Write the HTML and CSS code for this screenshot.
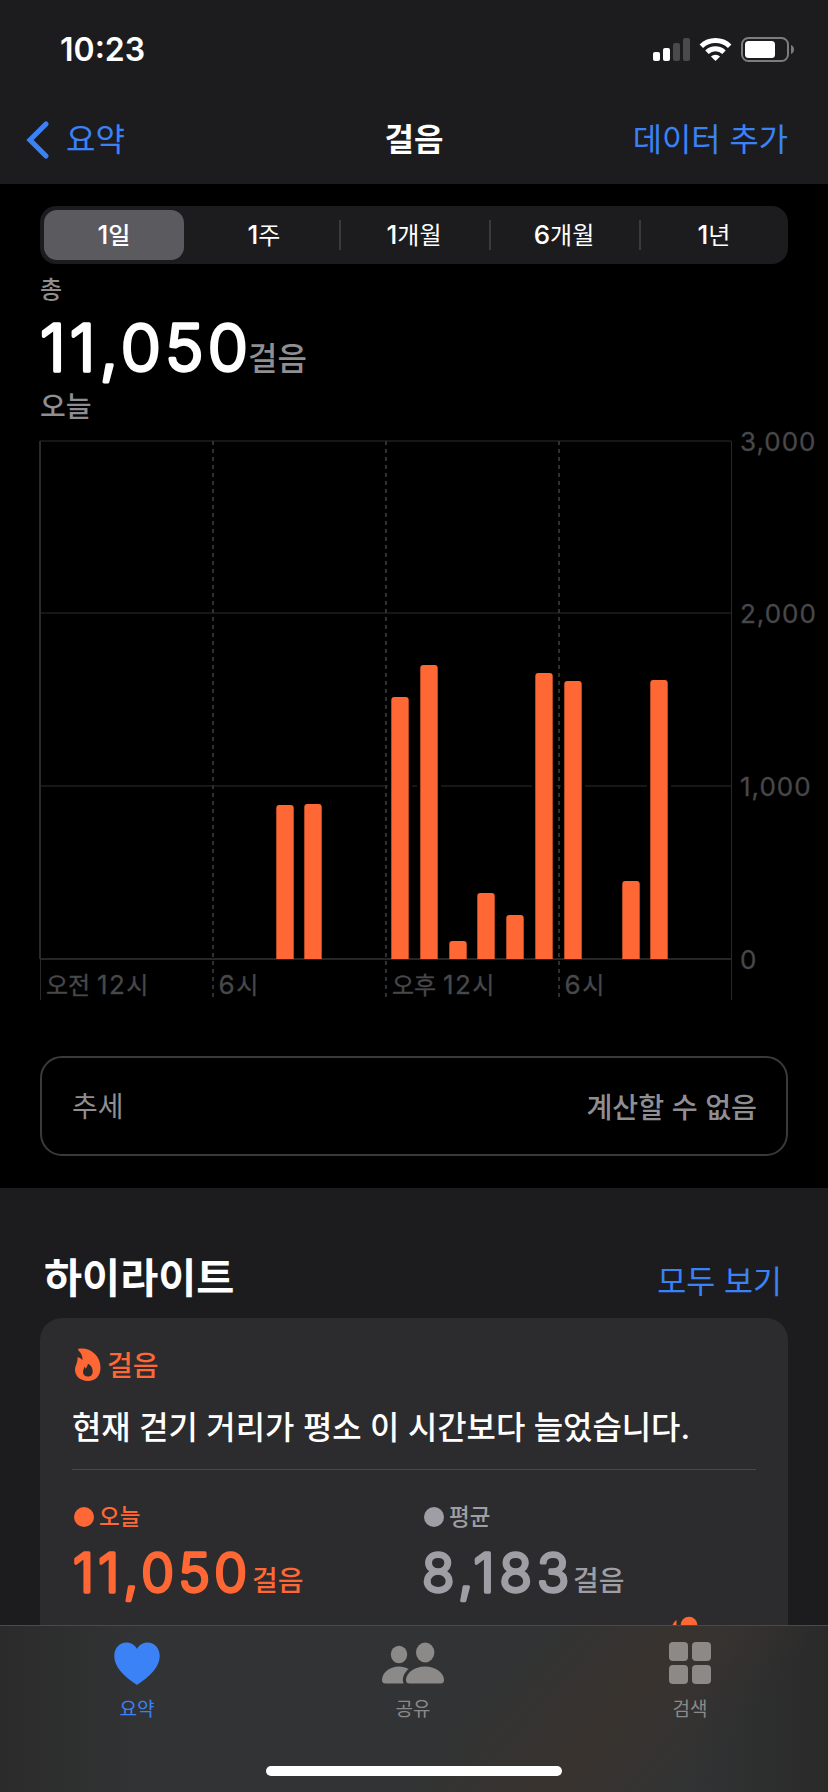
FILE: index.html
```html
<!DOCTYPE html>
<html lang="ko">
<head>
<meta charset="utf-8">
<title>걸음</title>
<link rel="stylesheet" href="styles.css">
</head>
<body>
<div class="screen">
  <header class="top">
    <div class="status">
      <span class="time">10:23</span>
      <svg class="status-icons" width="142" height="26" viewBox="653 37 142 26">
        <g fill="#fff"><rect x="653" y="52" width="7" height="9" rx="2"/><rect x="663" y="48" width="7" height="13" rx="2"/></g>
        <g fill="#4a4a4c"><rect x="673" y="43" width="7" height="18" rx="2"/><rect x="683" y="38" width="7" height="23" rx="2"/></g>
        <g fill="none" stroke="#fff" stroke-width="5"><path d="M701.3 46.3a20.6 20.6 0 0 1 28.4 0"/><path d="M707 52.2a12.4 12.4 0 0 1 17 0"/></g>
        <path fill="#fff" d="M715.5 61l-4.6-4.400a6.6 6.6 0 0 1 9.2 0z"/>
        <rect x="742" y="38" width="46" height="23" rx="6.5" fill="none" stroke="#7c7c7e" stroke-width="2"/>
        <rect x="745" y="41" width="30" height="17" rx="3.5" fill="#fff"/>
        <path fill="#7c7c7e" d="M791 45q3 1.4 3 4.5t-3 4.500z"/>
      </svg>
    </div>
    <nav class="nav">
      <a class="back">
        <svg width="24" height="40" viewBox="0 0 24 40"><path d="M20 4L4 20l16 16" fill="none" stroke="#3b82f7" stroke-width="5.200" stroke-linecap="round" stroke-linejoin="miter"/></svg>
        <span>요약</span>
      </a>
      <h1>걸음</h1>
      <a class="add">데이터 추가</a>
    </nav>
  </header>

  <main class="content">
    <div class="segments">
      <div class="segment selected"><span class="num">1</span>일</div>
      <div class="segment"><span class="num">1</span>주</div>
      <div class="segment divided"><span class="num">1</span>개월</div>
      <div class="segment divided"><span class="num">6</span>개월</div>
      <div class="segment divided"><span class="num">1</span>년</div>
    </div>

    <section class="summary">
      <div class="caption">총</div>
      <div class="total">
        <svg class="total-number" width="208" height="64"><text x="0" y="54" textLength="208">11,050</text></svg>
        <span>걸음</span>
      </div>
      <div class="period">오늘</div>
    </section>

    <svg class="chart" width="828" height="570" viewBox="0 435 828 570">
      <g stroke="#161617" stroke-width="2"><path d="M40 441H731M40 613H731M40 786H731"/></g>
      <path d="M40 959H732" stroke="#262628" stroke-width="2"/>
      <path d="M40 441V959" stroke="#2a2a2c" stroke-width="2"/>
      <path d="M40.500 959V1000M731.500 441V1000" stroke="#29292b"/>
      <path d="M213 441V1000M386 441V1000M559 441V1000" stroke="#303032" stroke-width="2" stroke-dasharray="4 4"/>
      <g fill="none" stroke="#000" stroke-width="4">
        <path d="M388 786h24M417 786h24M532 786h24M561 786h24M647 786h24"/>
      </g>
      <g fill="#ff6734">
        <path d="M276.300 959V808q0-3 3-3h11.400q3 0 3 3V959z"/>
        <path d="M304.300 959V807q0-3 3-3h11.400q3 0 3 3V959z"/>
        <path d="M391.300 959V700q0-3 3-3h11.400q3 0 3 3V959z"/>
        <path d="M420.300 959V668q0-3 3-3h11.400q3 0 3 3V959z"/>
        <path d="M449.300 959V944q0-3 3-3h11.400q3 0 3 3V959z"/>
        <path d="M477.300 959V896q0-3 3-3h11.400q3 0 3 3V959z"/>
        <path d="M506.300 959V918q0-3 3-3h11.400q3 0 3 3V959z"/>
        <path d="M535.300 959V676q0-3 3-3h11.400q3 0 3 3V959z"/>
        <path d="M564.300 959V684q0-3 3-3h11.400q3 0 3 3V959z"/>
        <path d="M622.300 959V884q0-3 3-3h11.400q3 0 3 3V959z"/>
        <path d="M650.300 959V683q0-3 3-3h11.400q3 0 3 3V959z"/>
      </g>
      <g class="axis-y">
        <text x="740" y="451">3,000</text><text x="740" y="623">2,000</text><text x="740" y="796">1,000</text><text x="740" y="969">0</text>
      </g>
      <g class="axis-x">
        <text x="46" y="994">오전 <tspan class="num">12</tspan>시</text>
        <text x="218.500" y="994"><tspan class="num">6</tspan>시</text>
        <text x="392" y="994">오후 <tspan class="num">12</tspan>시</text>
        <text x="564.500" y="994"><tspan class="num">6</tspan>시</text>
      </g>
    </svg>

    <div class="trend"><span>추세</span><strong>계산할 수 없음</strong></div>

    <section class="highlights">
      <div class="section-head"><h2>하이라이트</h2><a>모두 보기</a></div>
      <article class="card">
        <div class="card-title">
          <svg width="26" height="33" viewBox="0 0 26 33"><path fill="#ff6734" fill-rule="evenodd" d="M3.500.8C14-1.200 25.500 6.500 25.500 19.500 25.500 28 20.500 33 13 33 5 33 0 28 0 21.500c0-4 2.800-6 2.500-12.300 2.200.2 4 1.500 4.800 3C8 7.500 5.500 4.500 3.500 2.500 3 1.800 3 1 3.500.8zM13 15.700c-.4 2.200-1.500 3.600-2.200 5-.3-1-.8-1.600-1.300-2-.3 2-1.500 3-1.500 5.300 0 2.800 2 4.600 4.800 4.600 3 0 4.900-2 4.900-5.200 0-3.400-1.700-6.300-4.700-7.700z"/></svg>
          <span>걸음</span>
        </div>
        <p class="message">현재 걷기 거리가 평소 이 시간보다 늘었습니다.</p>
        <div class="stats">
          <div class="stat today">
            <div class="legend"><i></i>오늘</div>
            <div class="figure"><svg width="178" height="56"><text x="-1" y="47" textLength="174">11,050</text></svg><span>걸음</span></div>
          </div>
          <div class="stat">
            <div class="legend"><i></i>평균</div>
            <div class="figure"><svg width="149" height="56"><text x="-2" y="47" textLength="147">8,183</text></svg><span>걸음</span></div>
          </div>
        </div>
        <svg class="peek" width="28" height="12" viewBox="0 0 28 12"><circle cx="18" cy="10" r="8.300" fill="#ff6734"/><path fill="#ff6734" d="M1 12q1-5 4.500-7v7z"/></svg>
      </article>
    </section>
  </main>

  <footer class="tabbar">
    <div class="tabs">
      <div class="tab active">
        <svg width="46" height="43" viewBox="0 0 46 43"><path fill="#3b82f7" d="M23 43C19 40 .3 29 .3 14 .3 6 5.500.500 12.500.500 17 .500 21 3 23 7 25 3 29 .500 33.500.500 40.500.500 45.700 6 45.700 14 45.700 29 27 40 23 43z"/></svg>
        <span>요약</span>
      </div>
      <div class="tab">
        <svg width="62" height="43" viewBox="0 0 62 43" fill="#8b8a89"><ellipse cx="17" cy="12.500" rx="8.200" ry="8.800"/><ellipse cx="43.200" cy="10.500" rx="9.200" ry="10"/><path d="M3.500 41.500Q0 41.500 0 38C0 31 7 24.500 17 24.500c3.500 0 7 1 9.700 2.600C22.500 30.500 19.500 36 21.500 41.500z"/><path d="M27.500 41.500Q24 41.500 24 38C24 31 32 24.500 43 24.500S62 31 62 38q0 3.500-3.500 3.500z"/></svg>
        <span>공유</span>
      </div>
      <div class="tab">
        <svg width="42" height="43" viewBox="0 0 42 43" fill="#8d8987"><rect width="19" height="19" rx="4"/><rect x="23" width="19" height="19" rx="4"/><rect y="23" width="19" height="19" rx="4"/><rect x="23" y="23" width="19" height="19" rx="4"/></svg>
        <span>검색</span>
      </div>
    </div>
    <div class="home"></div>
  </footer>
</div>
</body>
</html>
```
FILE: styles.css
```css
* { box-sizing: border-box; }
body {
  margin: 0;
  background: #000;
  color: #fff;
  font-family: Inter, "Noto Sans CJK KR", sans-serif;
}
h1, h2, p { margin: 0; }
svg { display: block; flex: none; }
.screen {
  width: 828px;
  height: 1792px;
  display: flex;
  flex-direction: column;
  overflow: hidden;
}
.top { height: 184px; background: #1c1c1e; flex: none; }
.status {
  height: 96px;
  padding: 3px 33px 0 60px;
  display: flex;
  align-items: center;
  justify-content: space-between;
}
.time { font-size: 32px; font-weight: 600; line-height: 42px; }
.nav {
  height: 88px;
  display: grid;
  grid-template-columns: 1fr auto 1fr;
  align-items: center;
  padding: 0 40px 0 26px;
  font-size: 32px;
  line-height: 48px;
}
.nav h1 { font-size: 32px; font-weight: 600; margin-left: 14px; }
.nav a { color: #3b82f7; }
.back { display: flex; align-items: center; gap: 16px; }
.add { font-size: 31.800px; text-align: right; }
.content { flex: 1; min-height: 0; overflow: hidden; }

.segments {
  margin: 22px 40px 0;
  height: 58px;
  padding: 4px;
  display: grid;
  grid-template-columns: 140px repeat(4, 150px);
  background: #1c1c1e;
  border-radius: 16px;
}
.segment {
  position: relative;
  display: flex;
  align-items: baseline;
  justify-content: center;
  font-size: 24px;
  line-height: 49px;
}
.segment:nth-child(n+2) { left: 5px; }
.num { font-size: 26px; }
.segment .num { font-weight: 500; }
.selected { background: #5b5a5f; border-radius: 13px; font-weight: 500; }
.divided::before {
  content: "";
  position: absolute;
  left: 0;
  top: 10px;
  width: 2px;
  height: 30px;
  background: #3a3a3c;
}

.summary { height: 171px; padding-left: 40px; color: #8e8e93; }
.caption { height: 53px; font-size: 24px; font-weight: 500; line-height: 51px; }
.total { display: flex; height: 70px; }
.total span { font-size: 32px; font-weight: 500; line-height: 84px; }
.total-number { fill: #fff; stroke: #fff; stroke-width: 3.400px; stroke-linejoin: round; font-size: 65px; font-weight: 300; overflow: visible; }
.period { font-size: 28px; font-weight: 500; line-height: 36px; margin-top: 2px; }

.chart { font-size: 24px; overflow: visible; }
.axis-y { fill: #48484a; font-size: 26px; letter-spacing: 1px; stroke: #48484a; stroke-width: .3px; }
.axis-x { fill: #48484a; stroke: #48484a; stroke-width: .3px; }
.axis-x .num { letter-spacing: 1.500px; }

.trend {
  margin: 51px 40px 32px;
  height: 100px;
  padding: 0 29px 2px 30px;
  display: flex;
  align-items: center;
  justify-content: space-between;
  border: 2px solid #3a3a3c;
  border-radius: 22px;
  color: #8e8e93;
  font-size: 28px;
}
.trend strong { font-weight: 500; font-size: 28.200px; }

.highlights { height: 500px; padding: 62px 40px 0; background: #1c1c1e; }
.section-head {
  height: 68px;
  padding: 0 6px 0 4px;
  display: flex;
  justify-content: space-between;
}
.section-head h2 { font-size: 41.400px; font-weight: 600; line-height: 56px; }
.section-head a { font-size: 31.500px; line-height: 64px; color: #3b82f7; }
.card {
  position: relative;
  height: 400px;
  padding: 27px 32px 0;
  background: #2c2c2e;
  border-radius: 22px;
}
.card-title { display: flex; align-items: center; gap: 6px; height: 38px; padding-left: 3px; color: #ff6734; font-size: 28px; font-weight: 500; }
.message { height: 87px; border-bottom: 1px solid #48484a; font-size: 31.900px; font-weight: 500; line-height: 89px; white-space: nowrap; }
.stats { display: grid; grid-template-columns: 350px 1fr; }
.stat { color: #9f9ea4; padding: 31px 0 0 2px; }
.stat.today { color: #ff6734; }
.legend { display: flex; align-items: center; gap: 5px; height: 32px; font-size: 22.500px; font-weight: 500; line-height: 30px; }
.legend i { width: 20px; height: 20px; border-radius: 50%; background: currentColor; }
.figure { display: flex; height: 60px; padding-top: 12px; }
.figure svg { fill: currentColor; stroke: currentColor; stroke-width: 3.400px; stroke-linejoin: round; font-size: 53px; font-weight: 300; overflow: visible; }
.figure span { font-size: 28px; font-weight: 500; line-height: 72px; }
.peek { position: absolute; left: 631px; top: 297px; }

.tabbar {
  height: 167px;
  flex: none;
  border-top: 1px solid #4a4a4c;
  background:
    linear-gradient(131deg, transparent 56%, #39332f 71%, transparent 85%),
    linear-gradient(90deg, #2b2b2b, #323334 17%, #323334 83%, #2a2a2a);
  display: flex;
  flex-direction: column;
  align-items: center;
}
.tabs { width: 828px; height: 140px; display: grid; grid-template-columns: 274px 278px 276px; }
.tab { display: flex; flex-direction: column; align-items: center; padding-top: 16px; gap: 11px; color: #8b8a89; font-size: 19px; line-height: 28px; }
.tab.active { color: #3b82f7; }
.home { width: 296px; height: 10px; border-radius: 5px; background: #fff; }
```
